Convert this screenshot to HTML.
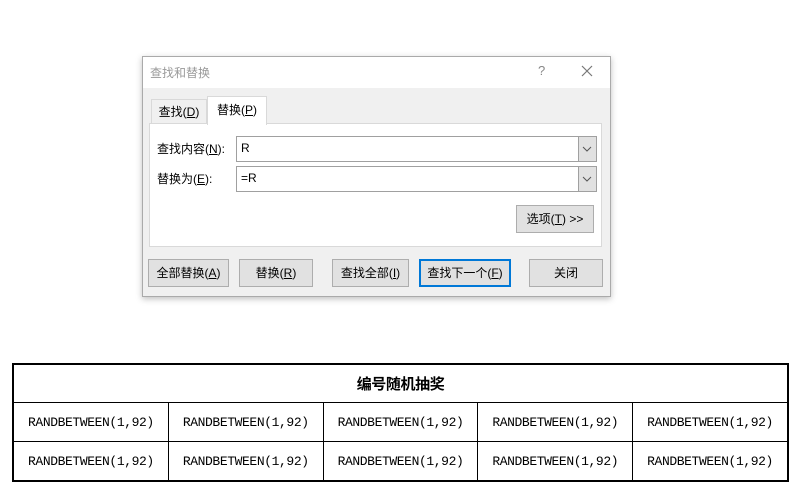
<!DOCTYPE html>
<html><head><meta charset="utf-8"><style>
body{margin:0;width:800px;height:500px;background:#fff;position:relative;overflow:hidden;font-family:"Liberation Sans","Noto Sans CJK SC",sans-serif;font-size:12px;color:#000}
.a{position:absolute;box-sizing:border-box}
.dlg{left:142px;top:56px;width:469px;height:241px;background:#f0f0f0;border:1px solid #aaa;box-shadow:0 2px 6px rgba(0,0,0,.25)}
.btn{position:absolute;box-sizing:border-box;background:#e1e1e1;border:1px solid #adadad;height:28px;top:202px;text-align:center;line-height:26px;font-size:12px}
.inp{position:absolute;box-sizing:border-box;background:#fff;border:1px solid #a0a0a0;height:26px;left:86px;width:361px;padding-left:4px;line-height:23px;font-size:12px}
.dd{position:absolute;right:0;top:0;width:17px;height:24px;background:#e1e1e1;border-left:1px solid #a0a0a0}
table{position:absolute;left:12px;top:363px;width:777px;border-collapse:collapse;border:2px solid #000}
td{border:1px solid #000;height:38px;text-align:center;font-family:"Liberation Mono",monospace;font-size:13px;letter-spacing:-0.4px;padding:0}
</style></head><body>
<div class="a dlg">
 <div class="a" style="left:0;top:0;width:467px;height:31px;background:#fff"></div>
 <div class="a" style="left:7px;top:7px;color:#999;font-size:12px">查找和替换</div>
 <div class="a" style="left:395px;top:6px;color:#888;font-size:13px">?</div>
 <svg class="a" style="left:438px;top:8px" width="12" height="12"><path d="M1 1L11 11M11 1L1 11" stroke="#777" stroke-width="1.2"/></svg>
 <div class="a" style="left:8px;top:42px;width:56px;height:25px;border:1px solid #d9d9d9;border-bottom:none;line-height:24px;text-align:center">查找(<u>D</u>)</div>
 <div class="a" style="left:64px;top:39px;width:60px;height:29px;background:#fff;border:1px solid #d9d9d9;border-bottom:none;line-height:26px;text-align:center;z-index:2">替换(<u>P</u>)</div>
 <div class="a" style="left:6px;top:66px;width:453px;height:124px;background:#fff;border:1px solid #d9d9d9">
  <div class="a" style="left:7px;top:16px">查找内容(<u>N</u>):</div>
  <div class="inp" style="top:12px">R<div class="dd"><svg width="16" height="24"><path d="M4 10L8 14L12 10" fill="none" stroke="#555"/></svg></div></div>
  <div class="a" style="left:7px;top:46px">替换为(<u>E</u>):</div>
  <div class="inp" style="top:42px">=R<div class="dd"><svg width="16" height="24"><path d="M4 10L8 14L12 10" fill="none" stroke="#555"/></svg></div></div>
  <div class="btn" style="left:366px;top:81px;width:78px">选项(<u>T</u>) &gt;&gt;</div>
 </div>
 <div class="btn" style="left:5px;width:81px">全部替换(<u>A</u>)</div>
 <div class="btn" style="left:96px;width:74px">替换(<u>R</u>)</div>
 <div class="btn" style="left:189px;width:77px">查找全部(<u>I</u>)</div>
 <div class="btn" style="left:276px;width:92px;border:2px solid #0078d7;line-height:24px">查找下一个(<u>F</u>)</div>
 <div class="btn" style="left:386px;width:74px">关闭</div>
</div>
<table>
<tr><td colspan="5" style="font-family:'Liberation Sans','Noto Sans CJK SC',sans-serif;font-weight:bold;font-size:15px;height:37px">编号随机抽奖</td></tr>
<tr><td>RANDBETWEEN(1,92)</td><td>RANDBETWEEN(1,92)</td><td>RANDBETWEEN(1,92)</td><td>RANDBETWEEN(1,92)</td><td>RANDBETWEEN(1,92)</td></tr>
<tr><td>RANDBETWEEN(1,92)</td><td>RANDBETWEEN(1,92)</td><td>RANDBETWEEN(1,92)</td><td>RANDBETWEEN(1,92)</td><td>RANDBETWEEN(1,92)</td></tr>
</table>
</body></html>
